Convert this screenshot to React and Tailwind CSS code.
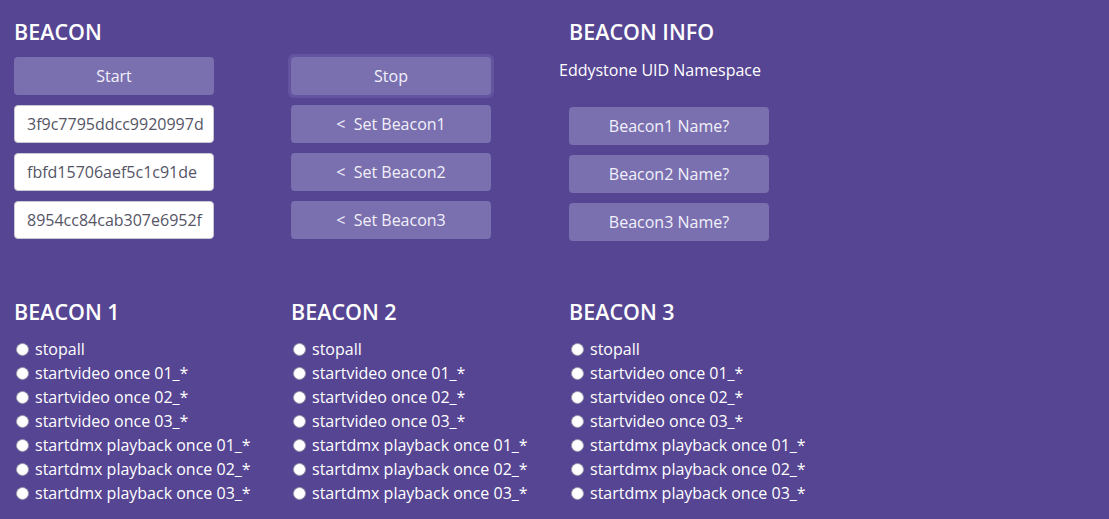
import React from "react";

const font = { fontFamily: '"Open Sans", "Noto Sans", sans-serif' };

function Btn({ children, focus }) {
  return (
    <div className={focus ? "self-start w-fit rounded-[6px] p-[3px] bg-[#6454a0] -m-[3px]" : "self-start w-fit"}>
      <button className="w-[200px] h-[38px] rounded-[4px] bg-[#7a70b0] text-[#f2f0fa] text-[16px] leading-[38px] text-center block">
        {children}
      </button>
    </div>
  );
}

function Input({ value }) {
  return (
    <div className="w-[200px] h-[38px] rounded-[4px] bg-white border border-[#c8c8d0] pl-[12px] pr-[4px] overflow-hidden whitespace-nowrap text-[16px] leading-[36px] text-[#555566]">
      {value}
    </div>
  );
}

const opts = [
  "stopall",
  "startvideo once 01_*",
  "startvideo once 02_*",
  "startvideo once 03_*",
  "startdmx playback once 01_*",
  "startdmx playback once 02_*",
  "startdmx playback once 03_*",
];

function RadioList({ title }) {
  return (
    <div>
      <h2 className="text-[21.5px] font-semibold leading-[30px] text-white">{title}</h2>
      <div className="mt-[10px] flex flex-col">
        {opts.map((o) => (
          <label key={o} className="flex items-center h-[24px] text-[16px] text-white">
            <span className="ml-[2px] w-[13px] h-[13px] rounded-full bg-white border border-[#9a98a8] inline-block" />
            <span className="ml-[6px]">{o}</span>
          </label>
        ))}
      </div>
    </div>
  );
}

export default function App() {
  return (
    <div style={font} className="w-[1109px] h-[519px] bg-[#564593] overflow-hidden pl-[14px] pt-[17px]">
      <div className="grid grid-cols-[277px_278px_1fr]">
        <div className="flex flex-col">
          <h1 className="text-[21.5px] font-semibold leading-[30px] text-white">BEACON</h1>
          <div className="mt-[10px] flex flex-col gap-[10px]">
            <Btn>Start</Btn>
            <Input value="3f9c7795ddcc9920997d" />
            <Input value="fbfd15706aef5c1c91de" />
            <Input value="8954cc84cab307e6952f" />
          </div>
        </div>
        <div className="flex flex-col pt-[40px] gap-[10px]">
          <Btn focus>Stop</Btn>
          <Btn>&lt;&nbsp; Set Beacon1</Btn>
          <Btn>&lt;&nbsp; Set Beacon2</Btn>
          <Btn>&lt;&nbsp; Set Beacon3</Btn>
        </div>
        <div className="flex flex-col">
          <h1 className="text-[21.5px] font-semibold leading-[30px] text-white">BEACON INFO</h1>
          <p className="ml-[-10px] mt-[11px] text-[16px] leading-[24px] text-white">Eddystone UID Namespace</p>
          <div className="mt-[25px] flex flex-col gap-[10px]">
            <Btn>Beacon1 Name?</Btn>
            <Btn>Beacon2 Name?</Btn>
            <Btn>Beacon3 Name?</Btn>
          </div>
        </div>
      </div>
      <div className="mt-[56px] grid grid-cols-[277px_278px_1fr]">
        <RadioList title="BEACON 1" />
        <RadioList title="BEACON 2" />
        <RadioList title="BEACON 3" />
      </div>
    </div>
  );
}
